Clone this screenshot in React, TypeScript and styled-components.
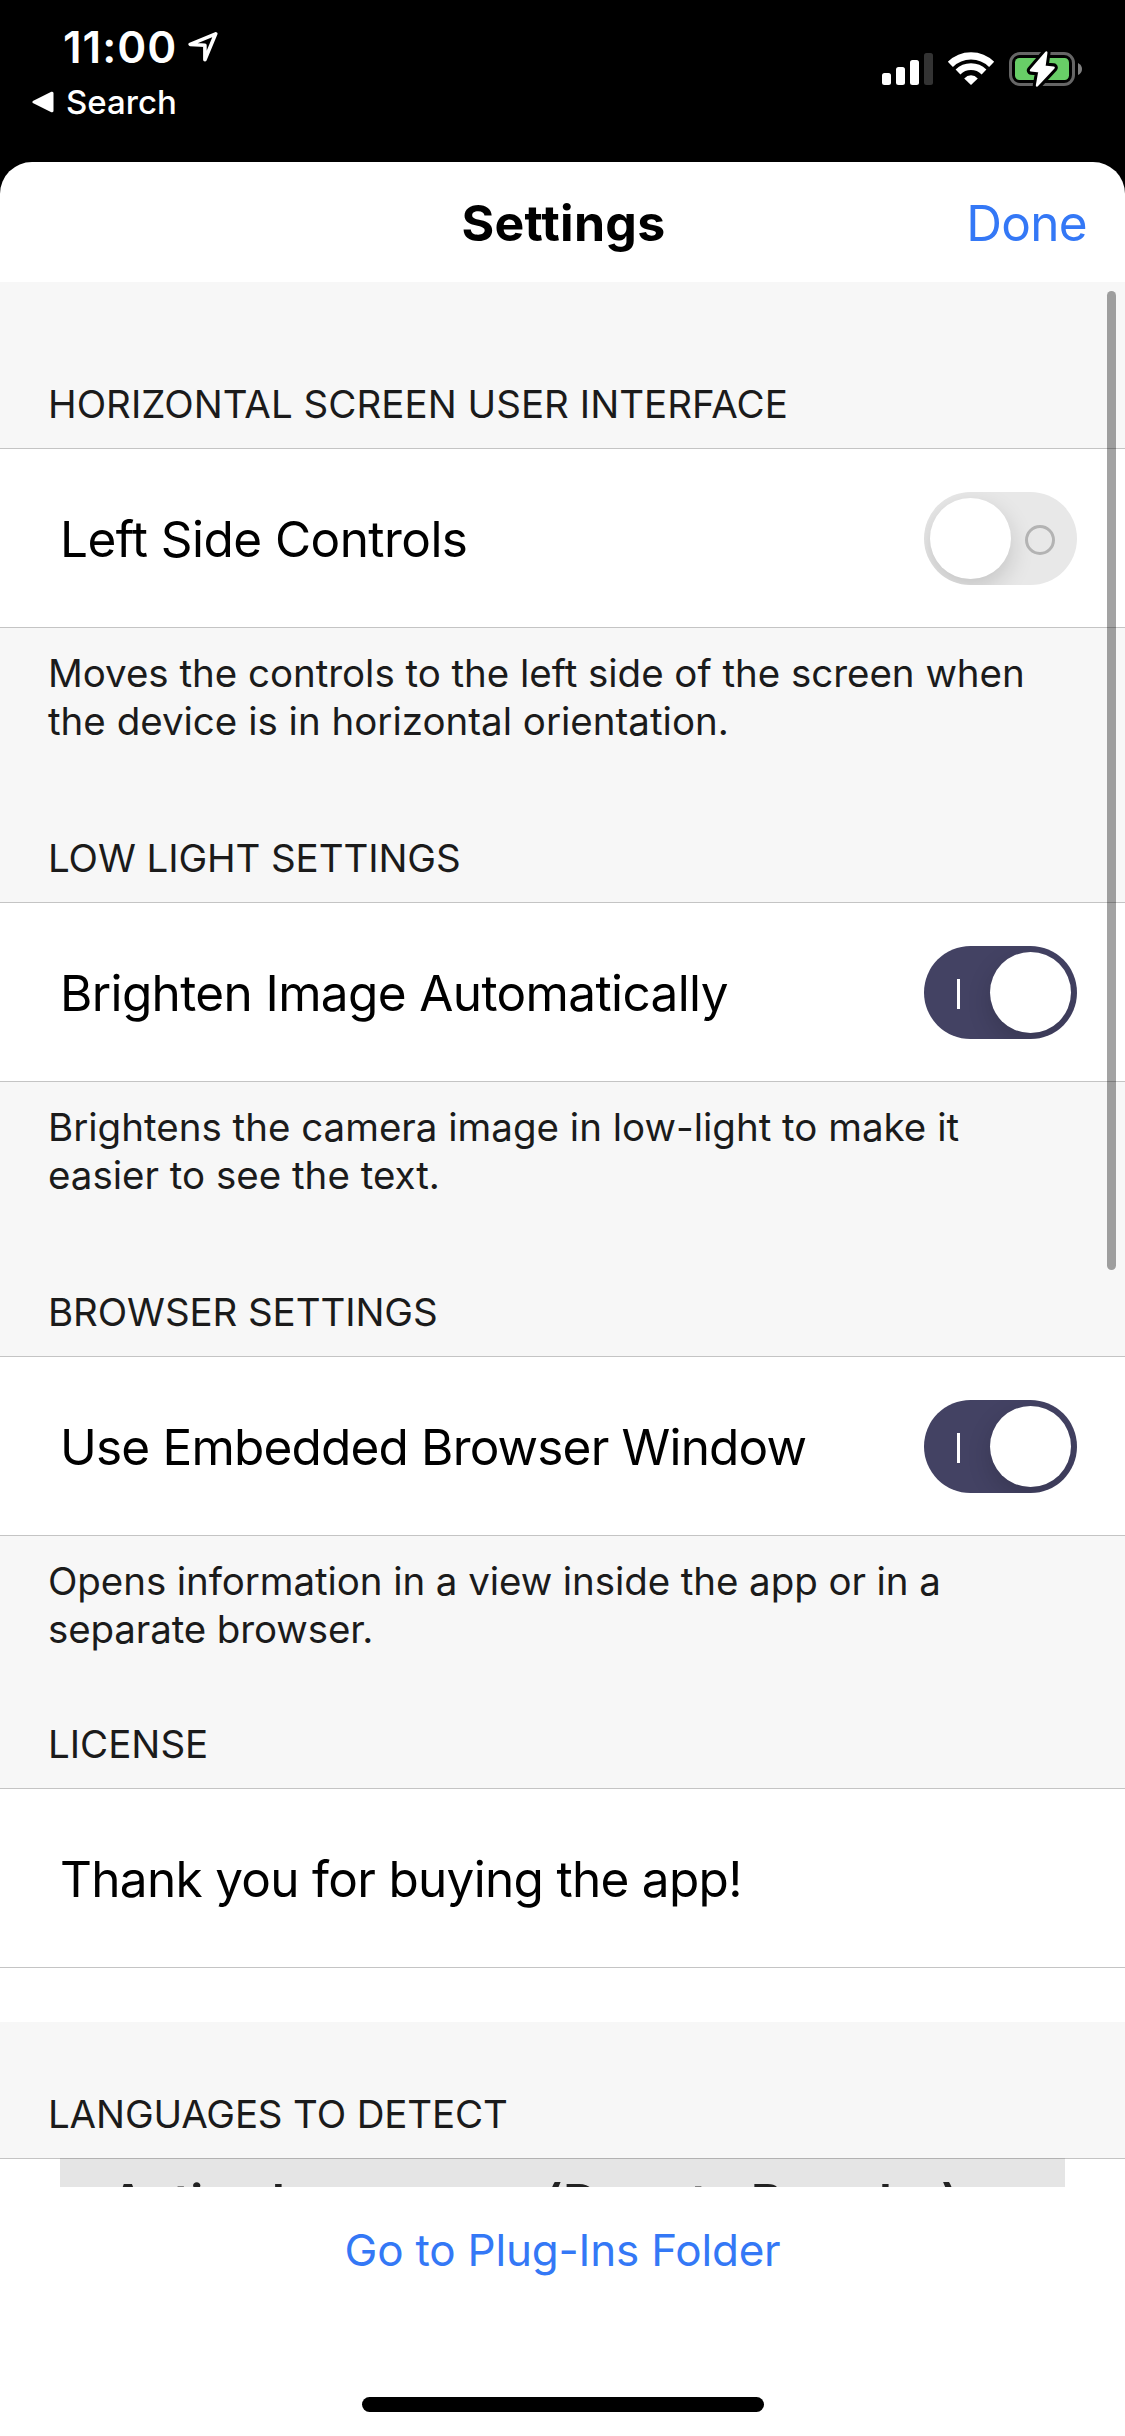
import React, { useState } from "react";
import styled, { createGlobalStyle } from "styled-components";

const GlobalStyle = createGlobalStyle`
  * { box-sizing: border-box; }
  body { margin: 0; background: #000; }
`;

const Phone = styled.div`
  width: 1125px;
  height: 2436px;
  display: flex;
  flex-direction: column;
  overflow: hidden;
  background: #000;
  font-family: Inter, "Liberation Sans", sans-serif;
  white-space: nowrap;
`;

const StatusBar = styled.div`
  height: 162px;
  flex: none;
  display: flex;
  justify-content: space-between;
  padding: 22px 42px 0 32px;
  color: #fff;
`;

const StatusLeft = styled.div`
  display: flex;
  flex-direction: column;
  gap: 10px;
`;

const Clock = styled.div`
  display: flex;
  align-items: center;
  gap: 11px;
  padding-left: 31px;
  font-size: 44px;
  font-weight: 600;
  line-height: 50px;
  letter-spacing: 1px;
`;

const BackLink = styled.div`
  display: flex;
  align-items: center;
  gap: 12px;
  font-size: 33px;
  font-weight: 500;
  line-height: 40px;
`;

const StatusIcons = styled.svg`
  display: block;
  margin-top: 26px;
`;

const Sheet = styled.div`
  position: relative;
  flex: 1;
  display: flex;
  flex-direction: column;
  overflow: hidden;
  border-radius: 32px 32px 0 0;
  background: #fff;
`;

const TitleBar = styled.header`
  height: 120px;
  flex: none;
  display: grid;
  grid-template-columns: 1fr auto 1fr;
  align-items: center;
  padding: 2px 38px 0;
`;

const Title = styled.h1`
  grid-column: 2;
  margin: 0;
  padding-left: 2px;
  font-size: 50px;
  font-weight: 700;
  line-height: 60px;
  letter-spacing: 0.3px;
`;

const LinkButton = styled.button<{ $size: number; $tracking: number }>`
  border: 0;
  padding: 0;
  background: none;
  justify-self: end;
  font-family: inherit;
  font-size: ${(p) => p.$size}px;
  letter-spacing: ${(p) => p.$tracking}px;
  line-height: 60px;
  color: #3478f6;
`;

const List = styled.main`
  height: 1905px;
  flex: none;
  overflow: hidden;
`;

const SectionTitle = styled.h2<{ $height: number; $tracking: number }>`
  height: ${(p) => p.$height}px;
  margin: 0;
  display: flex;
  align-items: flex-end;
  padding: 0 48px 20px;
  background: #f7f7f7;
  color: #1b1b1b;
  font-size: 38.5px;
  font-weight: 400;
  line-height: 48px;
  letter-spacing: ${(p) => p.$tracking}px;
`;

const Row = styled.div`
  height: 180px;
  display: flex;
  align-items: center;
  justify-content: space-between;
  padding: 1px 48px 0 60px;
  border: solid #c4c4c4;
  border-width: 1px 0;
  background: #fff;
`;

const RowLabel = styled.span<{ $tracking: number }>`
  font-size: 49.5px;
  line-height: 60px;
  letter-spacing: ${(p) => p.$tracking}px;
  color: #000;
`;

const Note = styled.p`
  margin: 0;
  padding: 21px 48px 0;
  background: #f7f7f7;
  color: #1b1b1b;
  font-size: 38.5px;
  line-height: 48px;
`;

const NoteLine = styled.span<{ $tracking: number }>`
  display: block;
  letter-spacing: ${(p) => p.$tracking}px;
`;

const Gap = styled.div`
  height: 54px;
  background: #fff;
`;

const Track = styled.button<{ $on: boolean }>`
  width: 153px;
  height: 93px;
  display: flex;
  flex-direction: ${(p) => (p.$on ? "row" : "row-reverse")};
  align-items: center;
  justify-content: space-between;
  padding: ${(p) => (p.$on ? "0 6px 0 33px" : "0 22px 0 6px")};
  border: 0;
  border-radius: 47px;
  overflow: hidden;
  background: ${(p) => (p.$on ? "#434263" : "#e8e8e8")};
`;

const Knob = styled.span`
  width: 81px;
  height: 81px;
  border-radius: 50%;
  background: #fff;
  box-shadow: 0 9px 24px rgba(0, 0, 0, 0.16);
`;

const OnMark = styled.span`
  width: 3px;
  height: 30px;
  margin-top: 3px;
  background: #fff;
`;

const OffMark = styled.span`
  width: 30px;
  height: 30px;
  margin-top: 3px;
  border: 3px solid #b3b3b3;
  border-radius: 50%;
`;

const LastTitle = styled(SectionTitle)`
  border-bottom: 1px solid #c4c4c4;
`;

const LanguageHeader = styled.div`
  position: relative;
  height: 150px;
  margin: -1px 60px 0;
  padding: 13px 50px 0;
  border-top: 1px solid #b2b2b2;
  background: #e5e5e5;
  color: #222;
  font-size: 49.5px;
  font-weight: 600;
  line-height: 60px;
  letter-spacing: -0.4px;
`;

const Hint = styled.span`
  letter-spacing: 0.15px;
`;

const ScrollThumb = styled.div`
  position: absolute;
  top: 129px;
  right: 9px;
  width: 9px;
  height: 979px;
  border-radius: 5px;
  background: rgba(0, 0, 0, 0.36);
`;

const BottomBar = styled.footer`
  flex: 1;
  display: flex;
  flex-direction: column;
  align-items: center;
  justify-content: space-between;
  padding: 33px 0 24px;
  background: #fff;
`;

const HomeIndicator = styled.div`
  width: 402px;
  height: 15px;
  border-radius: 8px;
  background: #000;
`;

function Toggle({ initial }: { initial: boolean }) {
  const [on, setOn] = useState(initial);
  return (
    <Track $on={on} role="switch" aria-checked={on} onClick={() => setOn(!on)}>
      {on ? <OnMark /> : <OffMark />}
      <Knob />
    </Track>
  );
}

type Line = { text: string; tracking: number };
type SettingSection = {
  title: Line;
  height: number;
  label: Line;
  on: boolean;
  note: Line[];
};

const sections: SettingSection[] = [
  {
    title: { text: "HORIZONTAL SCREEN USER INTERFACE", tracking: 0.03 },
    height: 166,
    label: { text: "Left Side Controls", tracking: -0.55 },
    on: false,
    note: [
      { text: "Moves the controls to the left side of the screen when", tracking: -0.03 },
      { text: "the device is in horizontal orientation.", tracking: 0 },
    ],
  },
  {
    title: { text: "LOW LIGHT SETTINGS", tracking: -0.1 },
    height: 157,
    label: { text: "Brighten Image Automatically", tracking: -0.63 },
    on: true,
    note: [
      { text: "Brightens the camera image in low-light to make it", tracking: 0 },
      { text: "easier to see the text.", tracking: 0 },
    ],
  },
  {
    title: { text: "BROWSER SETTINGS", tracking: -0.1 },
    height: 157,
    label: { text: "Use Embedded Browser Window", tracking: -0.82 },
    on: true,
    note: [
      { text: "Opens information in a view inside the app or in a", tracking: -0.08 },
      { text: "separate browser.", tracking: -0.12 },
    ],
  },
];

const BOLT = "M1046.3 52.5 1031 70.4 1039.5 71.3 1037 85.5 1053.6 67.6 1044.3 66.8Z";

export default function App() {
  return (
    <>
      <GlobalStyle />
      <Phone>
        <StatusBar>
          <StatusLeft>
            <Clock>
              11:00
              <svg width="30" height="30" viewBox="187.5 32 30 30">
                <path
                  d="M215.2 33.8 189.7 44.4 204.4 45.2 204.4 59.7Z"
                  fill="none"
                  stroke="#fff"
                  strokeWidth="3.6"
                  strokeLinejoin="round"
                />
              </svg>
            </Clock>
            <BackLink>
              <svg width="22" height="22" viewBox="0 0 22 22">
                <path d="M2 11 20 2.2V19.8Z" fill="#fff" stroke="#fff" strokeWidth="3" strokeLinejoin="round" />
              </svg>
              Search
            </BackLink>
          </StatusLeft>
          <StatusIcons width="203" height="42" viewBox="880 48 203 42">
            <rect x="882" y="73" width="9" height="12" rx="2.5" fill="#fff" />
            <rect x="896" y="67" width="9" height="18" rx="2.5" fill="#fff" />
            <rect x="910" y="60" width="9" height="25" rx="2.5" fill="#fff" />
            <rect x="924" y="53" width="9" height="32" rx="2.5" fill="#333" />
            <g fill="none" stroke="#fff">
              <path d="M950.35 64.35A29.2 29.2 0 0 1 991.65 64.35" strokeWidth="7.2" />
              <path d="M958 72A18.4 18.4 0 0 1 984 72" strokeWidth="6.8" />
            </g>
            <path d="M971 85 964.2 78.4Q967.2 75.2 971 75.2T977.8 78.4Z" fill="#fff" />
            <rect x="1010.5" y="53.5" width="63" height="31" rx="9.5" fill="none" stroke="#666" strokeWidth="3" />
            <rect x="1015" y="58" width="54" height="22" rx="4.5" fill="#68ce67" />
            <path d="M1078 63Q1082 65 1082 69T1078 75Z" fill="#808080" />
            <path d={BOLT} fill="#000" stroke="#000" strokeWidth="8.5" strokeLinejoin="round" />
            <path d={BOLT} fill="#fff" stroke="#fff" strokeWidth="2.4" strokeLinejoin="round" />
          </StatusIcons>
        </StatusBar>

        <Sheet>
          <TitleBar>
            <Title>Settings</Title>
            <LinkButton $size={49.5} $tracking={-0.7}>Done</LinkButton>
          </TitleBar>
          <List>
            {sections.map((s) => (
              <section key={s.title.text}>
                <SectionTitle $height={s.height} $tracking={s.title.tracking}>
                  {s.title.text}
                </SectionTitle>
                <Row>
                  <RowLabel $tracking={s.label.tracking}>{s.label.text}</RowLabel>
                  <Toggle initial={s.on} />
                </Row>
                <Note>
                  {s.note.map((line) => (
                    <NoteLine key={line.text} $tracking={line.tracking}>
                      {line.text}
                    </NoteLine>
                  ))}
                </Note>
              </section>
            ))}
            <SectionTitle $height={135} $tracking={0}>LICENSE</SectionTitle>
            <Row>
              <RowLabel $tracking={-0.7}>Thank you for buying the app!</RowLabel>
            </Row>
            <Gap />
            <LastTitle $height={137} $tracking={-0.15}>LANGUAGES TO DETECT</LastTitle>
            <LanguageHeader>
              Active Languages <Hint>(Drag to Reorder)</Hint>
            </LanguageHeader>
          </List>
          <BottomBar>
            <LinkButton $size={44} $tracking={-0.2}>Go to Plug-Ins Folder</LinkButton>
            <HomeIndicator />
          </BottomBar>
          <ScrollThumb />
        </Sheet>
      </Phone>
    </>
  );
}
